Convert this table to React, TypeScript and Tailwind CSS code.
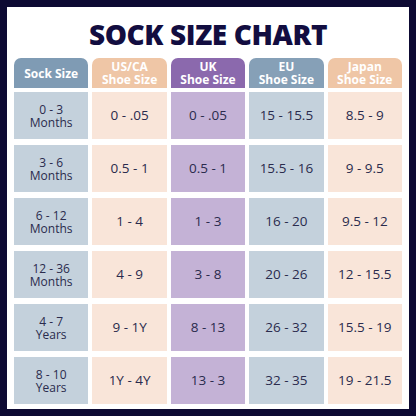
const headers = [
  { lines: ['Sock Size'], bg: 'bg-[#7f9bb4]' },
  { lines: ['US/CA', 'Shoe Size'], bg: 'bg-[#efc6a6]' },
  { lines: ['UK', 'Shoe Size'], bg: 'bg-[#8b69ad]' },
  { lines: ['EU', 'Shoe Size'], bg: 'bg-[#86a0b7]' },
  { lines: ['Japan', 'Shoe Size'], bg: 'bg-[#efc6a6]' },
];

const bodyBg = ['bg-[#c4d1dc]', 'bg-[#f9e5d9]', 'bg-[#c4b2d6]', 'bg-[#c4d1dc]', 'bg-[#f9e5d9]'];

const rows = [
  ['0 - 3', 'Months', '0 - .05', '0 - .05', '15 - 15.5', '8.5 - 9'],
  ['3 - 6', 'Months', '0.5 - 1', '0.5 - 1', '15.5 - 16', '9 - 9.5'],
  ['6 - 12', 'Months', '1 - 4', '1 - 3', '16 - 20', '9.5 - 12'],
  ['12 - 36', 'Months', '4 - 9', '3 - 8', '20 - 26', '12 - 15.5'],
  ['4 - 7', 'Years', '9 - 1Y', '8 - 13', '26 - 32', '15.5 - 19'],
  ['8 - 10', 'Years', '1Y - 4Y', '13 - 3', '32 - 35', '19 - 21.5'],
];

export default function App() {
  return (
    <div className="w-[416px] h-[416px] bg-[#0d0a33] p-[7px] font-['Open_Sans',sans-serif]">
      <div className="w-full h-full bg-white flex flex-col px-[7px]">
        <h1 className="h-[51px] pt-[10px] text-center text-[28px] leading-[34px] font-extrabold text-[#120d40] tracking-[-0.4px]">
          SOCK SIZE CHART
        </h1>
        <div className="grid grid-cols-5 gap-x-[4px]">
          {headers.map((h, i) => (
            <div
              key={i}
              className={`${h.bg} h-[30px] rounded-t-[7px] flex flex-col items-center justify-center text-white font-bold text-[12px] leading-[13px]`}
            >
              {h.lines.map((l) => (
                <span key={l}>{l}</span>
              ))}
            </div>
          ))}
        </div>
        <div className="grid grid-cols-5 gap-x-[4px] gap-y-[6px] mt-[4px]">
          {rows.map((r, ri) => (
            <>
              <div
                key={`a${ri}`}
                className={`${bodyBg[0]} h-[47px] flex flex-col items-center justify-center text-[#2a2b4d] text-[12px] leading-[13px]`}
              >
                <span>{r[0]}</span>
                <span>{r[1]}</span>
              </div>
              {r.slice(2).map((v, ci) => (
                <div
                  key={`${ri}-${ci}`}
                  className={`${bodyBg[ci + 1]} h-[47px] flex items-center justify-center text-[#2a2b4d] text-[13.5px]`}
                >
                  {v}
                </div>
              ))}
            </>
          ))}
        </div>
      </div>
    </div>
  );
}
